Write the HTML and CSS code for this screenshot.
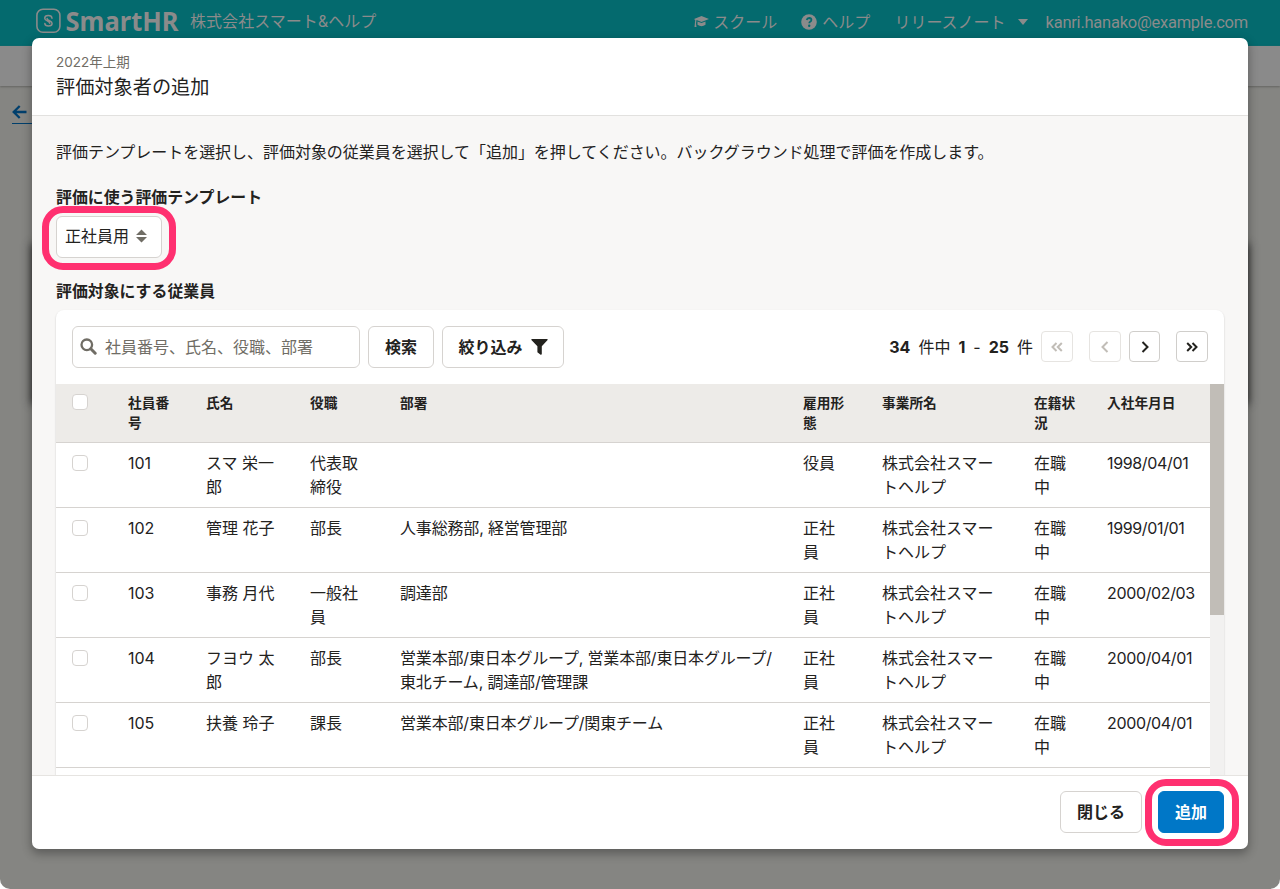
FILE: index.html
```html
<!DOCTYPE html>
<html lang="ja">
<head>
<meta charset="utf-8">
<title>評価対象者の追加</title>
<link rel="stylesheet" href="styles.css">
</head>
<body>
<div class="page">
  <header class="app-header">
    <svg class="brand" width="145" height="32" viewBox="0 0 145 32">
      <rect x="1.900" y="3.200" width="23" height="23" rx="6" fill="none" stroke="#8b8b8b" stroke-width="1.600"/>
      <path d="M17 12.200C16.800 8.800 9.800 8.600 9.700 12.200c0 2.600 5 2.700 5 5M9.800 17.400c.2 3.400 7.200 3.400 7.300 0 0-2.600-5-2.700-5-5" fill="none" stroke="#8b8b8b" stroke-width="1.500" stroke-linecap="round"/>
      <text class="brand-text" x="30.500" y="25" textLength="113" lengthAdjust="spacingAndGlyphs">SmartHR</text>
    </svg>
    <span class="company">株式会社スマート&amp;ヘルプ</span>
    <nav class="nav">
      <span class="nav-item school"><svg width="15" height="12" viewBox="0 0 15 12"><path fill="#8b8b8b" d="M7.500 0L15 3 7.500 6 2.500 4 2 7.500 2.500 11H.5L1.200 4 0 3zM3.500 5.400l4 1.600 4-1.600v3.400q-4 2.700-8 0z"/></svg>スクール</span>
      <span class="nav-item help"><svg width="16" height="16" viewBox="0 0 16 16"><circle cx="8" cy="8" r="7.800" fill="#8b8b8b"/><path d="M5.700 6q.5-2 2.500-2 2.200.1 2.200 2 0 1.200-1.300 1.800-.8.400-.8 1.400" fill="none" stroke="#046a6e" stroke-width="1.800"/><circle cx="8.200" cy="11.800" r="1.200" fill="#046a6e"/></svg>ヘルプ</span>
      <span class="nav-item notes">リリースノート<svg width="10" height="6" viewBox="0 0 10 6"><path fill="#8b8b8b" d="M0 0h10L5 6z"/></svg></span>
      <span class="nav-item mail">kanri.hanako@example.com</span>
    </nav>
  </header>
  <div class="app-bar"></div>
  <div class="back"><svg width="15" height="14" viewBox="0 0 15 14"><path d="M14.500 7H2M7.700 1L1.700 7l6 6" fill="none" stroke="#003f6c" stroke-width="2.300"/></svg></div>
  <div class="back-card"></div>
</div>

<section class="dialog">
  <header class="dialog-head">
    <p class="sub">2022年上期</p>
    <h1 class="title">評価対象者の追加</h1>
  </header>
  <div class="dialog-body">
    <p class="lead">評価テンプレートを選択し、評価対象の従業員を選択して「追加」を押してください。バックグラウンド処理で評価を作成します。</p>
    <h2 class="label">評価に使う評価テンプレート</h2>
    <div class="select">正社員用<svg width="11" height="14" viewBox="0 0 11 14"><path fill="#706d65" d="M0 6l5.500-5.500L11 6zM0 8h11l-5.500 5.500z"/></svg><i class="ring ring-select"></i></div>
    <h2 class="label label-staff">評価対象にする従業員</h2>
    <div class="card">
      <div class="tools">
        <div class="search"><svg width="17" height="17" viewBox="0 0 17 17"><circle cx="6.800" cy="6.800" r="5.300" fill="none" stroke="#706d65" stroke-width="2.300"/><path d="M10.800 10.800l4.400 4.400" stroke="#706d65" stroke-width="3" stroke-linecap="round"/></svg>社員番号、氏名、役職、部署</div>
        <button class="btn find">検索</button>
        <button class="btn filter">絞り込み<svg width="17" height="16" viewBox="0 0 17 16"><path fill="#23221e" d="M.8 0h15.400q.8.400.4 1.100L10.800 7.200V15q-.2 1-1.200.7L6.400 13.300V7.200L.4 1.100Q0 .4.800 0z"/></svg></button>
        <div class="count"><b>34</b><span>件中</span><b class="from">1</b><span class="dash">-</span><b>25</b><span>件</span></div>
        <div class="pager">
          <span class="pg off"><svg width="12" height="10" viewBox="0 0 12 10"><path d="M5.500 1L1.500 5l4 4M10.800 1l-4 4 4 4"/></svg></span>
          <span class="pg off prev"><svg width="8" height="12" viewBox="0 0 8 12"><path d="M6.500 1L1.500 6l5 5"/></svg></span>
          <span class="pg next"><svg width="8" height="12" viewBox="0 0 8 12"><path d="M1.500 1l5 5-5 5"/></svg></span>
          <span class="pg last"><svg width="12" height="10" viewBox="0 0 12 10"><path d="M1.200 1l4 4-4 4M6.500 1l4 4-4 4"/></svg></span>
        </div>
      </div>
      <div class="scroll">
        <table class="staff">
          <colgroup><col class="c1"><col class="c2"><col class="c3"><col class="c4"><col class="c5"><col class="c6"><col class="c7"><col class="c8"><col class="c9"></colgroup>
          <thead><tr><th><i class="box"></i></th><th>社員番<br>号</th><th>氏名</th><th>役職</th><th>部署</th><th>雇用形<br>態</th><th>事業所名</th><th>在籍状<br>況</th><th>入社年月日</th></tr></thead>
          <tbody>
            <tr><td><i class="box"></i></td><td>101</td><td>スマ 栄一<br>郎</td><td>代表取<br>締役</td><td class="dept"></td><td>役員</td><td>株式会社スマー<br>トヘルプ</td><td>在職<br>中</td><td class="date">1998/04/01</td></tr>
            <tr><td><i class="box"></i></td><td>102</td><td>管理 花子</td><td>部長</td><td class="dept">人事総務部, 経営管理部</td><td>正社<br>員</td><td>株式会社スマー<br>トヘルプ</td><td>在職<br>中</td><td class="date">1999/01/01</td></tr>
            <tr><td><i class="box"></i></td><td>103</td><td>事務 月代</td><td>一般社<br>員</td><td class="dept">調達部</td><td>正社<br>員</td><td>株式会社スマー<br>トヘルプ</td><td>在職<br>中</td><td class="date">2000/02/03</td></tr>
            <tr><td><i class="box"></i></td><td>104</td><td>フヨウ 太<br>郎</td><td>部長</td><td class="dept">営業本部/東日本グループ, 営業本部/東日本グループ/<br>東北チーム, 調達部/管理課</td><td>正社<br>員</td><td>株式会社スマー<br>トヘルプ</td><td>在職<br>中</td><td class="date">2000/04/01</td></tr>
            <tr><td><i class="box"></i></td><td>105</td><td>扶養 玲子</td><td>課長</td><td class="dept">営業本部/東日本グループ/関東チーム</td><td>正社<br>員</td><td>株式会社スマー<br>トヘルプ</td><td>在職<br>中</td><td class="date">2000/04/01</td></tr>
          </tbody>
        </table>
        <div class="track"><div class="thumb"></div></div>
      </div>
    </div>
  </div>
  <footer class="dialog-foot">
    <button class="btn close">閉じる</button>
    <button class="btn add">追加<i class="ring ring-add"></i></button>
  </footer>
</section>
</body>
</html>
```
FILE: styles.css
```css
* { box-sizing: border-box; }
html { background: #fff; }
body {
  margin: 0;
  width: 1280px;
  height: 889px;
  overflow: hidden;
  color: #23221e;
  font: 16px/24px Inter, "Noto Sans CJK JP", sans-serif;
}
p, h1, h2 { margin: 0; }
svg { flex: none; display: block; }
.page { height: 889px; background: #858582; border-radius: 0 0 10px 10px; overflow: hidden; }
.app-header { display: flex; height: 46px; padding: 6px 32px 0 35px; background: #046a6e; color: #8b8b8b; white-space: nowrap; }
.brand { overflow: visible; }
.brand-text { font: 700 26px "Noto Sans", sans-serif; fill: #8b8b8b; }
.company { margin-left: 10px; line-height: 31px; letter-spacing: 0.050px; }
.nav { display: flex; margin-left: auto; line-height: 31px; }
.nav-item { display: flex; align-items: center; height: 32px; }
.school { gap: 4px; margin-right: 24px; }
.help { gap: 5px; margin-right: 24px; }
.notes { gap: 12px; margin-right: 18px; }
.mail { font-family: Roboto, sans-serif; font-size: 16.500px; letter-spacing: -0.250px; }
.app-bar { height: 40px; background: #8a8a8a; box-shadow: 0 1px 2px #646462; }
.back { width: 60px; height: 38px; margin-left: 12px; padding-top: 19px; border-bottom: 1px solid #003f6c; }
.back-card { margin: 121px 32px 0; height: 158px; box-shadow: 0 0 8px 1px #333; }

.dialog {
  position: absolute;
  left: 32px;
  top: 38px;
  width: 1216px;
  height: 811px;
  display: flex;
  flex-direction: column;
  background: #fff;
  border-radius: 7px;
  box-shadow: 0 4px 10px 1px rgba(0, 0, 0, .3);
}
.dialog-head { height: 78px; padding: 14px 24px 0; border-bottom: 1px solid #e2e1df; }
.sub { font-size: 13.500px; line-height: 20px; color: #706d65; }
.title { padding-top: 1px; font-size: 19.200px; line-height: 28px; font-weight: 400; }
.dialog-body { flex: 1; min-height: 0; overflow: hidden; padding: 24px 24px 0; background: #f8f7f6; }
.lead { white-space: nowrap; letter-spacing: -0.040px; }
.label { margin-top: 22px; font-size: 15.900px; line-height: 24px; font-weight: 700; }
.select { position: relative; display: flex; align-items: center; gap: 7px; width: 106px; height: 42px; margin-top: 6px; padding: 0 0 2px 8px; border: 1px solid #d6d3d0; border-radius: 6px; background: #fff; }
.ring { position: absolute; border: 7px solid #ff3070; border-radius: 21px; }
.ring-select { left: -15px; top: -11px; width: 134px; height: 64px; }
.label-staff { margin-top: 22px; }
.card { height: 500px; margin-top: 6px; background: #fff; border-radius: 8px; box-shadow: 0 1px 2px rgba(0, 0, 0, .2); overflow: hidden; }
.tools { display: flex; height: 74px; padding: 16px 16px 0; }
.search { display: flex; align-items: center; gap: 8px; width: 288px; height: 42px; padding: 0 7px 1px; border: 1px solid #d6d3d0; border-radius: 6px; color: #706d65; white-space: nowrap; }
.btn { position: relative; display: flex; align-items: center; justify-content: center; height: 42px; padding: 0; border: 1px solid #d6d3d0; border-radius: 6px; background: #fff; color: #23221e; font: 700 16px/24px Inter, "Noto Sans CJK JP", sans-serif; white-space: nowrap; }
.find { width: 66px; margin-left: 8px; }
.filter { width: 122px; margin-left: 8px; gap: 8px; }
.count { display: flex; gap: 8px; margin-left: auto; line-height: 42px; white-space: nowrap; }
.pager { display: flex; margin: 5px 0 0 8px; }
.pg { display: flex; align-items: center; justify-content: center; width: 32px; height: 31px; border: 1px solid #d0cecb; border-radius: 4px; }
.pg path { fill: none; stroke: #23221e; stroke-width: 2; }
.off { border-color: #e6e4e1; }
.off path { stroke: #c1bdb7; }
.prev { margin-left: 16px; }
.next { margin-left: 8px; width: 31px; }
.last { margin-left: 16px; }
.scroll { display: flex; align-items: flex-start; }
.staff { width: 1154px; table-layout: fixed; border-collapse: separate; border-spacing: 0; }
.c1 { width: 56px; } .c2 { width: 78px; } .c3 { width: 104px; } .c4 { width: 90px; } .c5 { width: 403px; }
.c6 { width: 79px; } .c7 { width: 152px; } .c8 { width: 73px; } .c9 { width: 119px; }
th, td { padding: 8px 0 8px 16px; border-bottom: 1px solid #d6d3d0; text-align: left; vertical-align: top; white-space: nowrap; }
th { height: 59px; padding-top: 9px; background: #edebe8; font-size: 13.700px; line-height: 20px; }
td { height: 65px; }
.dept { letter-spacing: -0.170px; }
.date { letter-spacing: -0.350px; }
.box { display: block; width: 16px; height: 16px; margin-top: 4px; border: 1px solid #d6d3d0; border-radius: 4px; background: #fff; }
th .box { margin-top: 1px; }
.track { width: 14px; height: 426px; background: #f2f1f0; }
.thumb { height: 231px; background: #c1bdb7; }
.dialog-foot { display: flex; justify-content: flex-end; gap: 16px; height: 74px; padding: 15px 24px 0; border-top: 1px solid #e6e4e1; }
.close { width: 82px; }
.add { width: 66px; background: #0077c7; border-color: #0077c7; color: #fff; }
.ring-add { left: -14px; top: -13px; width: 94px; height: 67px; }
```
